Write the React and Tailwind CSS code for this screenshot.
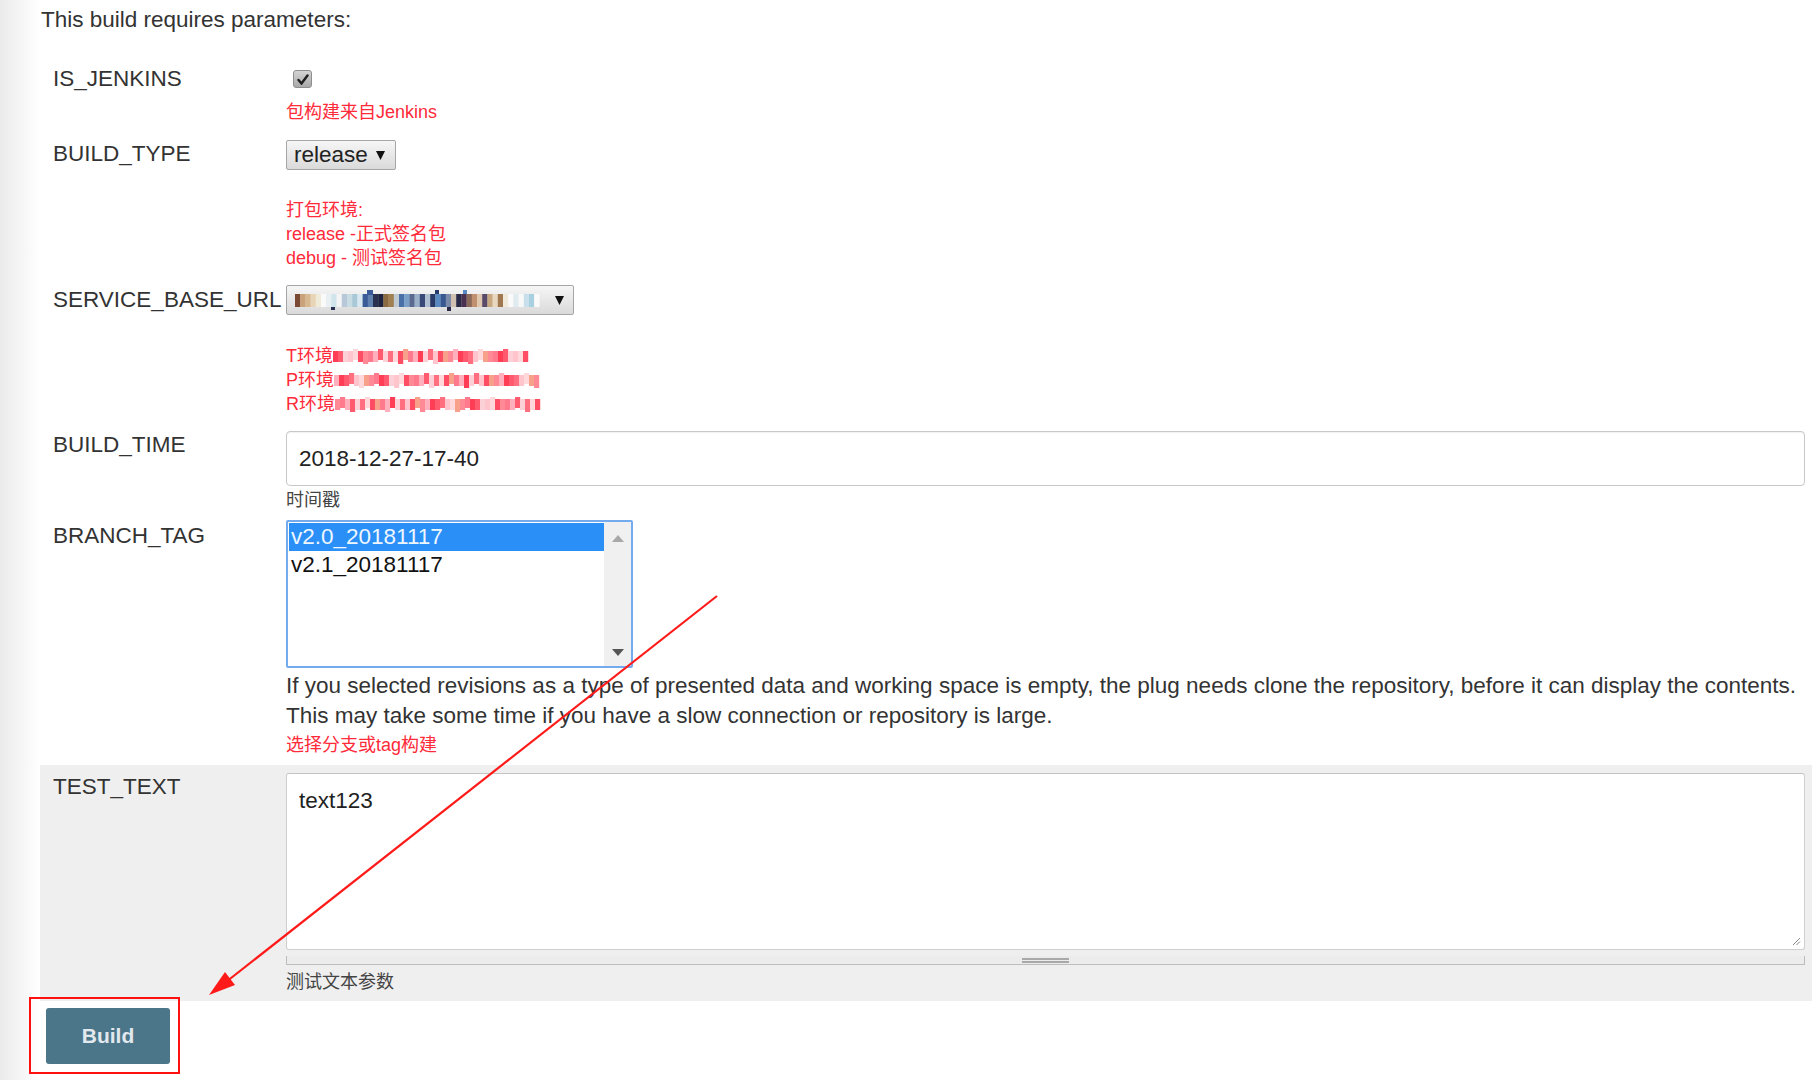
import React from 'react';

const FONT = { fontFamily: '"Liberation Sans", Arial, "Noto Sans CJK SC", sans-serif' };

const urlColors = [
  '#7a4a35', '#c9a27a', '#d8b890', '#e8d5b8', '#f0ead8', '#fafafa', '#e8f0f4', '#d0e4ec',
  '#f4f4f4', '#b8c8d8', '#c8dce4', '#a8c8d8', '#d8e8f0', '#3a5a98', '#6080b0', '#2a3050',
  '#1e2440', '#8a6a40', '#a08050', '#c0c8d0', '#4a70a8', '#7aa0c8', '#5a6a90', '#9ab0c8',
  '#3a4a78', '#b0c0d0', '#2a3a68', '#5a88c0', '#3a5890', '#7a8aa8', '#d0c0b0', '#2a2a48',
  '#4a3050', '#8a6a5a', '#c09070', '#e0c8b0', '#5a4a6a', '#c8a880', '#e8d8c0', '#a07850',
  '#f0e8d8', '#fafafa', '#e0ecf0', '#f8f8f8', '#c8e0ec', '#a8d0e0', '#fafafa',
];

const pinks = ['#ff5a6e', '#ff8a96', '#ffc4cc', '#ff3e55', '#f7a08a', '#ff6f7f', '#ffb0bc', '#ff4d63', '#fbd0d6', '#ff7a8c', '#ffd8dc'];

const UrlMosaic = () => (
  <svg width="245" height="22" viewBox="0 0 245 22">
    {urlColors.map((c, i) => (
      <rect key={i} x={i * 5.2} y="5" width="5.4" height="13" fill={c} />
    ))}
    <rect x="72" y="1" width="6" height="5" fill="#3a5a98" />
    <rect x="140" y="1" width="4" height="4" fill="#2a3a68" />
    <rect x="168" y="1" width="4" height="4" fill="#5a88c0" />
    <rect x="152" y="18" width="4" height="4" fill="#2a2a48" />
    <rect x="36" y="18" width="4" height="3" fill="#2a3050" />
  </svg>
);

const RedMosaic = ({ seed, n }) => (
  <svg width={n * 5 + 2} height="16" viewBox={`0 0 ${n * 5 + 2} 16`}>
    {Array.from({ length: n }).map((_, i) => (
      <rect key={i} x={i * 5} y={(i + seed) % 5 === 0 ? 1 : 3} width="5.2" height={(i + seed) % 7 === 0 ? 13 : 11}
        fill={pinks[(i * 7 + seed * 3 + (i % 3)) % pinks.length]} />
    ))}
  </svg>
);

const Arrow = ({ color = '#000', up = false, w = 10, h = 9 }) => (
  <svg width={w} height={h} viewBox="0 0 10 9" preserveAspectRatio="none">
    <path d={up ? 'M0 9 L5 0 L10 9 Z' : 'M0 0 L10 0 L5 9 Z'} fill={color} />
  </svg>
);

const Label = ({ children, pt }) => (
  <div className={`w-[246px] shrink-0 pl-[13px] text-[22.5px] leading-[26px] text-[#333] whitespace-nowrap ${pt}`}>{children}</div>
);

const Red = ({ children }) => <div className="text-[18px] leading-[24px] text-[#ff2a3a] whitespace-nowrap">{children}</div>;

export default function App() {
  return (
    <div className="relative h-[1080px] w-full overflow-hidden bg-white" style={FONT}>
      <div className="flex h-full">
        <div className="w-[40px] shrink-0 bg-gradient-to-r from-[#ebebeb] to-white" />
        <div className="flex-1 mr-[5px]">
          <div className="h-[40px] pl-[1px] text-[22.5px] leading-[40px] text-[#333]">This build requires parameters:</div>

          {/* IS_JENKINS */}
          <div className="flex mt-[22px]">
            <Label pt="pt-[4px]">IS_JENKINS</Label>
            <div className="flex-1 pr-[7px]">
              <div className="mt-[8px] ml-[7px] flex h-[18px] w-[19px] items-center justify-center rounded-[3px] border border-[#8e8e8e] bg-gradient-to-b from-[#d4d4d4] to-[#a9a9a9]">
                <svg width="12" height="11" viewBox="0 0 12 11">
                  <path d="M1.5 6 L4.5 9.5 L10.5 1.5" stroke="#1e1e1e" strokeWidth="2.4" fill="none" strokeLinecap="round" />
                </svg>
              </div>
              <div className="mt-[12px]"><Red>包构建来自Jenkins</Red></div>
            </div>
          </div>

          {/* BUILD_TYPE */}
          <div className="flex mt-[16px]">
            <Label pt="pt-[1px]">BUILD_TYPE</Label>
            <div className="flex-1 pr-[7px]">
              <div className="flex h-[30px] w-[110px] items-center justify-between rounded-[2px] border border-[#a6a6a6] bg-gradient-to-b from-[#f6f6f6] to-[#dadada] pl-[7px] pr-[10px] text-[22.5px] text-[#222]">
                <span className="leading-[26px]">release</span>
                <Arrow w={9} h={9} color="#111" />
              </div>
              <div className="mt-[28px]">
                <Red>打包环境:</Red>
                <Red>release -正式签名包</Red>
                <Red>debug - 测试签名包</Red>
              </div>
            </div>
          </div>

          {/* SERVICE_BASE_URL */}
          <div className="flex mt-[15px]">
            <Label pt="pt-[2px]">SERVICE_BASE_URL</Label>
            <div className="flex-1 pr-[7px]">
              <div className="flex h-[30px] w-[288px] items-center justify-between rounded-[2px] border border-[#a6a6a6] bg-gradient-to-b from-[#f6f6f6] to-[#dadada] pl-[8px] pr-[9px]">
                <UrlMosaic />
                <Arrow w={9} h={9} color="#111" />
              </div>
              <div className="mt-[29px]">
                <div className="flex items-center"><Red>T环境</Red><RedMosaic seed={1} n={39} /></div>
                <div className="flex items-center"><Red>P环境</Red><RedMosaic seed={2} n={41} /></div>
                <div className="flex items-center"><Red>R环境</Red><RedMosaic seed={4} n={41} /></div>
              </div>
            </div>
          </div>

          {/* BUILD_TIME */}
          <div className="flex mt-[15px]">
            <Label pt="pt-[1px]">BUILD_TIME</Label>
            <div className="flex-1 pr-[7px]">
              <div className="flex h-[55px] w-full items-center rounded-[4px] border border-[#c8c8c8] bg-white pl-[12px] text-[22.5px] text-[#222] shadow-[inset_0_1px_1px_rgba(0,0,0,0.06)]">
                2018-12-27-17-40
              </div>
              <div className="mt-[2px] text-[18px] leading-[24px] text-[#444]">时间戳</div>
            </div>
          </div>

          {/* BRANCH_TAG */}
          <div className="flex mt-[8px]">
            <Label pt="pt-[3px]">BRANCH_TAG</Label>
            <div className="flex-1 pr-[7px]">
              <div className="flex h-[148px] w-[347px] rounded-[2px] border-2 border-[#74abef] bg-white">
                <div className="flex-1 pt-[1px] pl-[1px] text-[22.5px] leading-[28px]">
                  <div className="h-[28px] bg-[#2a8ff7] pl-[2px] text-[#eef6ff]">v2.0_20181117</div>
                  <div className="h-[28px] pl-[2px] text-[#111]">v2.1_20181117</div>
                </div>
                <div className="flex w-[27px] flex-col items-center justify-between bg-[#f0f0f0] pt-[13px] pb-[10px]">
                  <Arrow up w={12} h={7} color="#a8a8a8" />
                  <Arrow w={12} h={7} color="#555" />
                </div>
              </div>
              <div className="mt-[3px] text-[22.5px] leading-[30px] text-[#333]">
                <div className="whitespace-nowrap">If you selected revisions as a type of presented data and working space is empty, the plug needs clone the repository, before it can display the contents.</div>
                <div className="whitespace-nowrap">This may take some time if you have a slow connection or repository is large.</div>
              </div>
              <div className="text-[18px] leading-[28px] text-[#ff2a3a]">选择分支或tag构建</div>
            </div>
          </div>

          {/* TEST_TEXT */}
          <div className="flex mt-[6px] bg-[#efefef] pb-[7px]">
            <Label pt="pt-[9px]">TEST_TEXT</Label>
            <div className="flex-1 pr-[7px] pt-[8px]">
              <div className="relative h-[177px] w-full rounded-[3px] border border-[#cfcfcf] border-t-[#c4c4c4] bg-white pl-[12px] pt-[14px] text-[22.5px] leading-[26px] text-[#222]">
                text123
                <svg className="absolute right-[3px] bottom-[3px]" width="10" height="10" viewBox="0 0 10 10">
                  <path d="M9 2 L2 9 M9 5.5 L5.5 9" stroke="#8a8a8a" strokeWidth="1" />
                </svg>
              </div>
              <div className="mt-[6px] flex h-[9px] justify-center border-x border-b border-[#bdbdbd] bg-[#ececec]">
                <div className="mt-[2px] flex h-[5px] w-[47px] flex-col justify-between">
                  <div className="h-[2px] bg-[#a9a9a9]" />
                  <div className="h-[2px] bg-[#a9a9a9]" />
                </div>
              </div>
              <div className="mt-[5px] text-[18px] leading-[24px] text-[#444]">测试文本参数</div>
            </div>
          </div>

          <div className="mt-[7px] ml-[6px] flex h-[56px] w-[124px] items-center justify-center rounded-[3px] bg-[#4b7589] text-[21px] font-bold text-[#e2e9ee]">
            Build
          </div>
        </div>
      </div>

      {/* annotation */}
      <div className="pointer-events-none absolute left-[29px] top-[997px] h-[77px] w-[151px] border-2 border-[#ff1010]" />
      <svg className="pointer-events-none absolute left-0 top-0" width="1817" height="1080" viewBox="0 0 1817 1080">
        <line x1="717" y1="596" x2="226" y2="982" stroke="#ff1a1a" strokeWidth="2.2" />
        <path d="M209 995 L235 985 L225 972 Z" fill="#ff1a1a" />
      </svg>
    </div>
  );
}
